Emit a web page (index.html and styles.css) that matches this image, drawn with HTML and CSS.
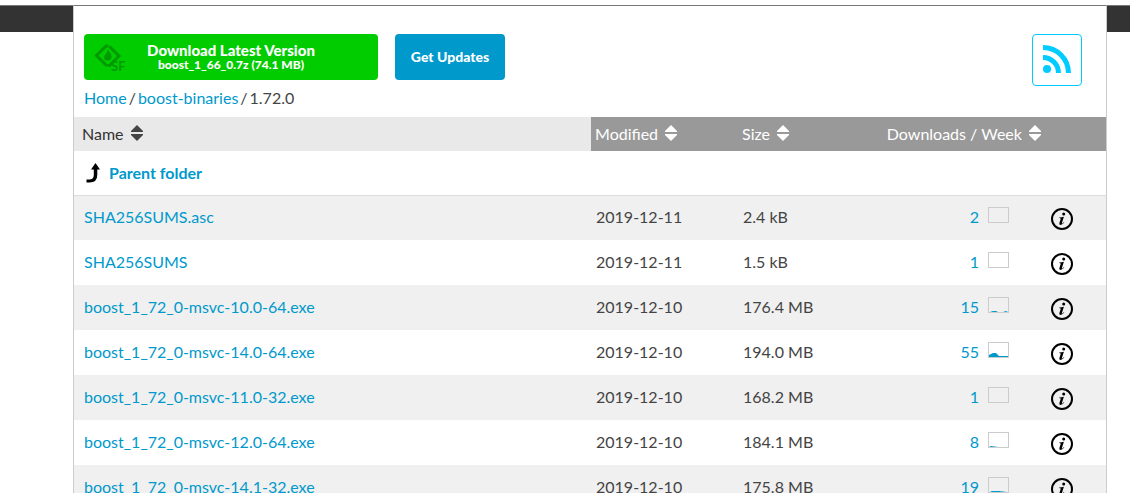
FILE: index.html
```
<!DOCTYPE html>
<html lang="en">
<head>
<meta charset="utf-8">
<title>boost-binaries / 1.72.0</title>
<link rel="stylesheet" href="styles.css">
</head>
<body>
<svg class="defs" aria-hidden="true">
  <symbol id="sort" viewBox="0 0 12 16"><path d="M6 0L12 6V7H0V6z"/><path d="M6 16L12 10V9H0V10z"/></symbol>
  <symbol id="info" viewBox="0 0 22 22">
    <circle cx="11" cy="11" r="10" fill="none" stroke="currentColor" stroke-width="2"/>
    <circle cx="12.700" cy="6.100" r="1.500"/>
    <path d="M8.300 9.500Q10.500 9.300 12.900 8.700L10.900 15.100Q10.700 15.900 11.300 15.600Q12 15.200 12.900 14L13.300 14.300Q11.500 17 9.600 17Q7.900 17 8.400 15.100L9.700 10.900Q9.900 10 8.200 10z"/>
  </symbol>
</svg>
<div class="page">
  <main class="panel">
    <div class="actions">
      <button class="btn download" type="button">
        <svg class="sf-logo" viewBox="0 0 34 28" aria-hidden="true">
          <path d="M14.500 2H12L2.500 11.500L13 22" fill="none" stroke="currentColor" stroke-width="3"/>
          <path d="M15.500 2.500L25 12L15.500 21.500H13.500" fill="none" stroke="currentColor" stroke-width="3"/>
          <path d="M13.700 5.500Q18 10.500 17.500 13.200Q17 16.500 13.700 16.500Q10 16.500 10 13Q10 11.500 12 9.700Q13.500 8.200 13.700 5.500z"/>
          <text class="sf-text" x="17" y="27">SF</text>
        </svg>
        <span class="download-title">Download Latest Version</span>
        <span class="download-file">boost_1_66_0.7z (74.1 MB)</span>
      </button>
      <button class="btn updates" type="button">Get Updates</button>
      <a class="rss" href="#rss" aria-label="RSS feed">
        <svg viewBox="0 0 28 28" aria-hidden="true">
          <circle cx="4" cy="24" r="4"/>
          <path d="M0 12.500A15.500 15.500 0 0 1 15.500 28M0 2.500A25.500 25.500 0 0 1 25.500 28" fill="none" stroke="currentColor" stroke-width="5"/>
        </svg>
      </a>
    </div>
    <nav class="crumbs"><a href="#home">Home</a><span>/</span><a href="#binaries">boost-binaries</a><span>/</span><span>1.72.0</span></nav>
    <table class="files">
      <colgroup><col class="c-name"><col class="c-date"><col class="c-size"><col><col class="c-info"></colgroup>
      <thead>
        <tr>
          <th class="sorted" scope="col">Name <svg class="sort"><use href="#sort"/></svg></th>
          <th scope="col">Modified <svg class="sort"><use href="#sort"/></svg></th>
          <th scope="col">Size <svg class="sort"><use href="#sort"/></svg></th>
          <th scope="col" class="weekly" colspan="2">Downloads / Week <svg class="sort"><use href="#sort"/></svg></th>
        </tr>
      </thead>
      <tbody>
        <tr class="parent">
          <td colspan="5"><a href="#parent"><svg class="up" viewBox="0 0 14 20" aria-hidden="true"><path d="M9.500 0L14 6.500H11.300V12Q11.300 19.500 3.500 19.500H0.500V16.500H3Q7.800 16.500 7.800 12V6.500H5z"/></svg>Parent folder</a></td>
        </tr>
        <tr>
          <td><a href="#f1">SHA256SUMS.asc</a></td><td>2019-12-11</td><td>2.4 kB</td>
          <td class="count"><a href="#s1">2<svg class="spark" viewBox="0 0 19 14"></svg></a></td>
          <td class="about"><button type="button" aria-label="File details"><svg><use href="#info"/></svg></button></td>
        </tr>
        <tr>
          <td><a href="#f2">SHA256SUMS</a></td><td>2019-12-11</td><td>1.5 kB</td>
          <td class="count"><a href="#s2">1<svg class="spark" viewBox="0 0 19 14"></svg></a></td>
          <td class="about"><button type="button" aria-label="File details"><svg><use href="#info"/></svg></button></td>
        </tr>
        <tr>
          <td><a href="#f3">boost_1_72_0-msvc-10.0-64.exe</a></td><td>2019-12-10</td><td>176.4 MB</td>
          <td class="count"><a href="#s3">15<svg class="spark" viewBox="0 0 19 14"><path d="M1 14L4 13H7L9 14zM14 14L17 13L19 14z"/></svg></a></td>
          <td class="about"><button type="button" aria-label="File details"><svg><use href="#info"/></svg></button></td>
        </tr>
        <tr>
          <td><a href="#f4">boost_1_72_0-msvc-14.0-64.exe</a></td><td>2019-12-10</td><td>194.0 MB</td>
          <td class="count"><a href="#s4">55<svg class="spark" viewBox="0 0 19 14"><path d="M0 12L4 10H7L10 13H19V14H0z"/></svg></a></td>
          <td class="about"><button type="button" aria-label="File details"><svg><use href="#info"/></svg></button></td>
        </tr>
        <tr>
          <td><a href="#f5">boost_1_72_0-msvc-11.0-32.exe</a></td><td>2019-12-10</td><td>168.2 MB</td>
          <td class="count"><a href="#s5">1<svg class="spark" viewBox="0 0 19 14"></svg></a></td>
          <td class="about"><button type="button" aria-label="File details"><svg><use href="#info"/></svg></button></td>
        </tr>
        <tr>
          <td><a href="#f6">boost_1_72_0-msvc-12.0-64.exe</a></td><td>2019-12-10</td><td>184.1 MB</td>
          <td class="count"><a href="#s6">8<svg class="spark" viewBox="0 0 19 14"><path d="M0 14L2 13L9 14z"/></svg></a></td>
          <td class="about"><button type="button" aria-label="File details"><svg><use href="#info"/></svg></button></td>
        </tr>
        <tr>
          <td><a href="#f7">boost_1_72_0-msvc-14.1-32.exe</a></td><td>2019-12-10</td><td>175.8 MB</td>
          <td class="count"><a href="#s7">19<svg class="spark" viewBox="0 0 19 14"><path d="M1 14L3 13H10L18 14z"/></svg></a></td>
          <td class="about"><button type="button" aria-label="File details"><svg><use href="#info"/></svg></button></td>
        </tr>
      </tbody>
    </table>
  </main>
</div>
</body>
</html>
```
FILE: styles.css
```
* { box-sizing: border-box; }
body { margin: 0; background: #fff; color: #444; font: 16px/24px Lato, sans-serif; }
svg { fill: currentColor; }
a { color: #09c; text-decoration: none; }
button { font-family: inherit; cursor: pointer; }
.defs { display: none; }

.page {
  height: 100vh;
  overflow: hidden;
  padding: 5px 23px 0 73px;
  background: linear-gradient(#fff 5px, #777 5px, #777 6px, #333 6px, #333 32px, #fff 32px);
}
.panel {
  min-height: 100%;
  padding-top: 28px;
  background: #fff;
  border: 1px solid #ccc;
  border-top-color: #777;
  border-bottom: 0;
}

.actions { display: flex; align-items: flex-start; gap: 17px; height: 52px; padding: 0 24px 0 10px; }
.btn { height: 46px; padding: 0; border: 0; border-radius: 4px; color: #fff; font-weight: 900; }
.download {
  position: relative;
  display: flex;
  flex-direction: column;
  align-items: center;
  justify-content: center;
  width: 294px;
  padding-bottom: 2px;
  background: #0c0;
}
.download-title { font-size: 15px; line-height: 16px; }
.download-file { font-size: 12px; line-height: 13px; }
.sf-logo { position: absolute; left: 10px; top: 10px; width: 34px; height: 28px; color: #009a00; }
.sf-text { font: 700 13px Lato, sans-serif; }
.updates { width: 110px; padding-bottom: 1px; background: #09c; font-size: 14px; }
.rss {
  display: grid;
  place-items: center;
  width: 50px;
  height: 52px;
  padding-bottom: 2px;
  margin-left: auto;
  color: #0cf;
  border: 1px solid #0cf;
  border-radius: 4px;
}
.rss svg { display: block; width: 28px; height: 28px; }

.crumbs { display: flex; gap: 2px; padding: 0 10px 7px; }

.files { width: 100%; border-collapse: separate; border-spacing: 0; table-layout: fixed; }
.c-name { width: 50.1%; }
.c-date { width: 147px; }
.c-size { width: 130px; }
.c-info { width: 88px; }
th {
  height: 34px;
  padding: 0 4px;
  background: #999;
  color: #fff;
  font-weight: 400;
  text-align: left;
}
th.sorted { padding-left: 8px; background: #e9e9e9; color: #333; }
th.weekly { padding-right: 65px; text-align: right; }
.sort { width: 12px; height: 16px; margin-left: 3px; vertical-align: -1px; }
.sorted .sort { color: #444; }
td { height: 45px; padding: 0 5px 2px; }
td:first-child { padding-left: 10px; }
tbody tr:nth-child(even) { background: #f0f0f0; }
.parent td { height: 45px; padding-bottom: 0; border-bottom: 1px solid #ddd; font-weight: 700; }
.parent + tr td { height: 44px; }
.up { width: 14px; height: 20px; margin: 0 9px 0 2px; vertical-align: -4px; color: #000; }
td.count { padding-right: 9px; text-align: right; }
.spark { width: 21px; height: 16px; margin-left: 9px; border: 1px solid #ccc; }
td.about { padding-bottom: 0; }
.about button { display: block; margin: 2px auto 0; padding: 0; border: 0; background: none; color: #000; }
.about svg { display: block; width: 22px; height: 22px; }
```
